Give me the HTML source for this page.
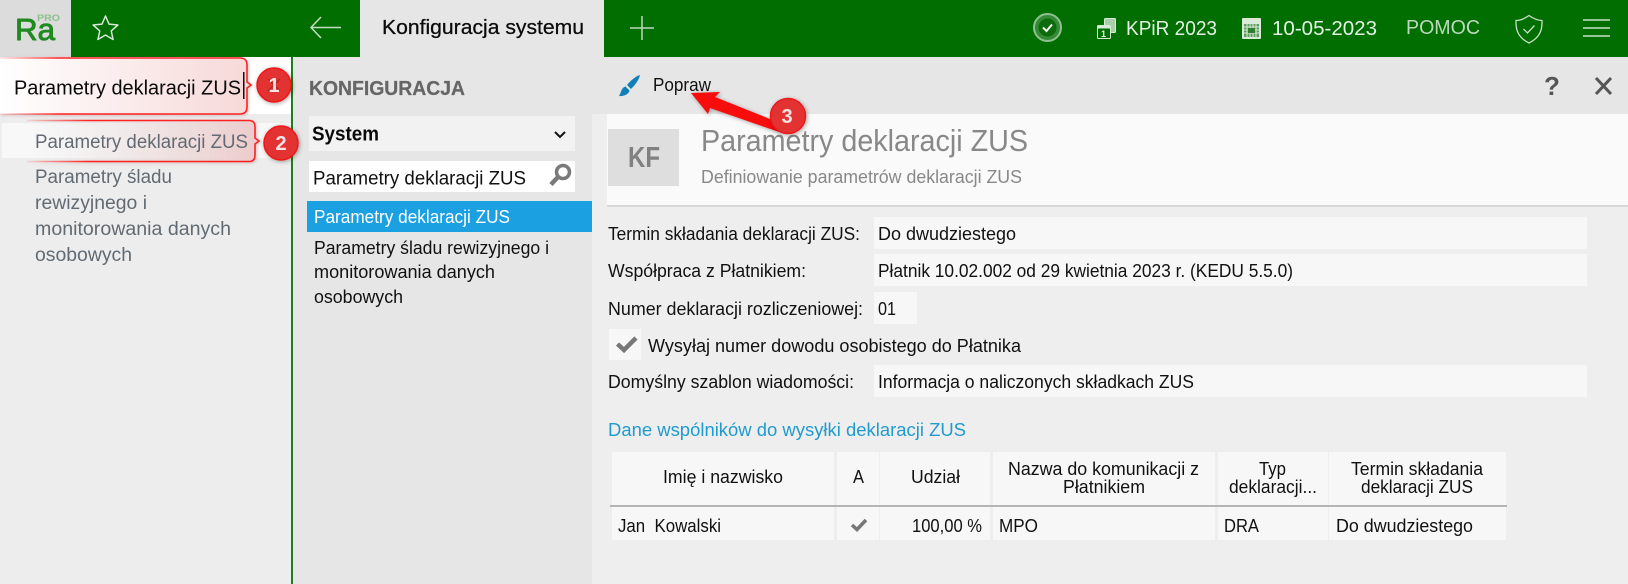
<!DOCTYPE html>
<html lang="pl">
<head>
<meta charset="utf-8">
<title>Parametry deklaracji ZUS</title>
<style>
html,body{margin:0;padding:0;width:1628px;height:584px;overflow:hidden;background:#eee}
svg{display:block;position:absolute;left:0;top:0}
text{font-family:"Liberation Sans",sans-serif;white-space:pre}
.a{font-size:19px;fill:#111}
.b{font-size:18px;fill:#111}
.g{font-size:19px;fill:#626b73}
</style>
</head>
<body>
<svg width="1628" height="584" viewBox="0 0 1628 584" xmlns="http://www.w3.org/2000/svg">
<defs>
<linearGradient id="c1" gradientUnits="userSpaceOnUse" x1="0" y1="0" x2="247" y2="0"><stop offset="0" stop-color="#fff"/><stop offset="1" stop-color="#f7d9d9"/></linearGradient>
<linearGradient id="s1" gradientUnits="userSpaceOnUse" x1="0" y1="0" x2="60" y2="0"><stop offset="0" stop-color="#ff2020" stop-opacity=".1"/><stop offset="1" stop-color="#ff2020"/></linearGradient>
<linearGradient id="c2" gradientUnits="userSpaceOnUse" x1="27" y1="0" x2="255" y2="0"><stop offset="0" stop-color="#f8f8f8" stop-opacity="0"/><stop offset="1" stop-color="#edcccc"/></linearGradient>
<linearGradient id="s2" gradientUnits="userSpaceOnUse" x1="27" y1="0" x2="90" y2="0"><stop offset="0" stop-color="#ff2020" stop-opacity=".1"/><stop offset="1" stop-color="#ff2020"/></linearGradient>
<filter id="sh" x="-30%" y="-30%" width="160%" height="160%"><feDropShadow dx="1" dy="1" stdDeviation="2" flood-color="#000" flood-opacity=".35"/></filter>
<filter id="sc" x="-10%" y="-20%" width="120%" height="140%"><feDropShadow dx="1" dy="1" stdDeviation="1.500" flood-color="#700" flood-opacity=".22"/></filter>
</defs>

<!-- backgrounds -->
<rect x="0" y="0" width="1628" height="584" fill="#eeeeee"/>
<rect x="0" y="0" width="1628" height="57" fill="#006e00"/>
<rect x="0" y="0" width="71" height="57" fill="#dcdcdc"/>
<rect x="360" y="0" width="244" height="57" fill="#e6e6e6"/>
<rect x="0" y="57" width="291" height="57" fill="#ffffff"/>
<rect x="0" y="114" width="291" height="470" fill="#ededed"/>
<rect x="291" y="57" width="2" height="527" fill="#1e7e1e"/>
<rect x="293" y="57" width="299" height="527" fill="#e6e6e6"/>
<rect x="592" y="57" width="1036" height="57" fill="#e6e6e6"/>

<!-- logo -->
<text x="15" y="40" style="font-size:31px;fill:#1f8a1f;stroke:#1f8a1f;stroke-width:.9" textLength="40" lengthAdjust="spacingAndGlyphs">Ra</text>
<text x="37" y="21" style="font-size:9px;fill:#8dbf8d;font-weight:bold" textLength="23" lengthAdjust="spacingAndGlyphs">PRO</text>

<!-- top bar icons -->
<path d="M105.500 16L109 24.100 117.900 25 111.200 30.900 113.100 39.500 105.500 35 97.900 39.500 99.800 30.900 93.100 25 102 24.100Z" fill="none" stroke="#d8e8d8" stroke-width="1.500" stroke-linejoin="round"/>
<path d="M341 27.500H311M321 17L311 27.500 321 38" fill="none" stroke="#c4dec4" stroke-width="1.500"/>
<path d="M642 16V40M630 28H654" fill="none" stroke="#bcd9bc" stroke-width="1.500"/>
<text x="382" y="34" style="font-size:20px;fill:#0a0a0a;stroke:#0a0a0a;stroke-width:.25" textLength="202" lengthAdjust="spacingAndGlyphs">Konfiguracja systemu</text>

<circle cx="1047.500" cy="27.500" r="13.500" fill="#338a33" stroke="#8fbf8f" stroke-width="2"/>
<circle cx="1047.500" cy="27.500" r="9" fill="#0d6b0d"/>
<path d="M1043 27.500L1046.500 31 1052 24.500" fill="none" stroke="#eef6ee" stroke-width="2"/>

<rect x="1104.500" y="18.500" width="11" height="14" rx="1" fill="#a9cfa9" stroke="#d8ead8"/>
<rect x="1097.500" y="25.500" width="13" height="13" rx="1" fill="#006e00" stroke="#d8ead8"/>
<rect x="1097.500" y="25.500" width="13" height="3" fill="#d8ead8"/>
<text x="1101" y="37" style="font-size:9px;font-weight:bold;fill:#e6f2e6">1</text>
<text x="1126" y="35" style="font-size:20px;fill:#e4f1e4" textLength="91" lengthAdjust="spacingAndGlyphs">KPiR 2023</text>

<rect x="1242" y="18" width="19" height="21" rx="1" fill="#d8ead8"/>
<rect x="1244" y="24" width="15" height="13" fill="#5f9c5f"/>
<path d="M1244 27h15M1244 30h15M1244 33h15M1247 24v13M1250 24v13M1253 24v13M1256 24v13" stroke="#d8ead8" stroke-width="1"/>
<rect x="1248" y="28" width="7" height="5" fill="#2f7f2f"/>
<text x="1272" y="35" style="font-size:20px;fill:#e4f1e4" textLength="105" lengthAdjust="spacingAndGlyphs">10-05-2023</text>
<text x="1406" y="34" style="font-size:20px;fill:#bcd9bc" textLength="74" lengthAdjust="spacingAndGlyphs">POMOC</text>

<path d="M1529 15.500C1524 19 1520 20.500 1516 20.500C1515.500 31 1519 38 1529 43C1539 38 1542.500 31 1542 20.500C1538 20.500 1534 19 1529 15.500Z" fill="none" stroke="#c8e0c8" stroke-width="1.300"/>
<path d="M1523.500 29L1527.500 33 1534.500 25.500" fill="none" stroke="#c8e0c8" stroke-width="1.300"/>
<path d="M1583 20H1610M1583 28H1610M1583 36H1610" stroke="#c8e0c8" stroke-width="1.500"/>

<!-- sidebar search -->
<path d="M0 58H240Q247 58 247 65V82L251 85 247 88V107Q247 114 240 114H0" fill="url(#c1)" stroke="url(#s1)" stroke-width="1.600" filter="url(#sc)"/>
<text x="14" y="94.500" style="font-size:20px;fill:#0a0a0a" textLength="227" lengthAdjust="spacingAndGlyphs">Parametry deklaracji ZUS</text>
<rect x="243" y="72" width="1.500" height="27" fill="#111"/>

<!-- sidebar list -->
<rect x="2" y="123" width="289" height="35" fill="#f8f8f8"/>
<path d="M27 120.500H249Q255 120.500 255 127V138L259 141 255 144V155Q255 161.500 249 161.500H27" fill="url(#c2)" stroke="url(#s2)" stroke-width="1.600" filter="url(#sc)"/>
<text x="35" y="148" class="g" textLength="213" lengthAdjust="spacingAndGlyphs">Parametry deklaracji ZUS</text>
<text x="35" y="183" class="g" textLength="137" lengthAdjust="spacingAndGlyphs">Parametry śladu</text>
<text x="35" y="209" class="g" textLength="112" lengthAdjust="spacingAndGlyphs">rewizyjnego i</text>
<text x="35" y="235" class="g" textLength="196" lengthAdjust="spacingAndGlyphs">monitorowania danych</text>
<text x="35" y="261" class="g" textLength="97" lengthAdjust="spacingAndGlyphs">osobowych</text>

<!-- middle panel -->
<text x="309" y="95" style="font-size:20px;font-weight:bold;fill:#666;stroke:#666;stroke-width:.25" textLength="156" lengthAdjust="spacingAndGlyphs">KONFIGURACJA</text>
<rect x="309" y="116" width="266" height="35" fill="#f2f2f2"/>
<text x="312" y="140.500" style="font-size:20px;font-weight:bold;fill:#0a0a0a" textLength="67" lengthAdjust="spacingAndGlyphs">System</text>
<path d="M555 132L560 137 565 132" fill="none" stroke="#111" stroke-width="2"/>
<rect x="309" y="161" width="266" height="31" fill="#fff"/>
<text x="313" y="184.500" class="a" textLength="213" lengthAdjust="spacingAndGlyphs">Parametry deklaracji ZUS</text>
<circle cx="563" cy="172" r="6.500" fill="none" stroke="#7a7a7a" stroke-width="3.500"/>
<path d="M558 177L551 184.500" stroke="#7a7a7a" stroke-width="4.500"/>
<rect x="307" y="201" width="285" height="31" fill="#1ba1e2"/>
<text x="314" y="223" class="b" style="fill:#fff" textLength="196" lengthAdjust="spacingAndGlyphs">Parametry deklaracji ZUS</text>
<text x="314" y="254" class="b" textLength="235" lengthAdjust="spacingAndGlyphs">Parametry śladu rewizyjnego i</text>
<text x="314" y="278" class="b" textLength="181" lengthAdjust="spacingAndGlyphs">monitorowania danych</text>
<text x="314" y="303" class="b" textLength="89" lengthAdjust="spacingAndGlyphs">osobowych</text>

<!-- toolbar -->
<path d="M640 75C636 76 630 81 627 85L631 89C635 85 639 80 640 75Z" fill="#1080b8"/>
<path d="M625.500 86.500C621 88 621.500 92 619 96C624 96.500 629 94 629.500 90.500Z" fill="#1080b8"/>
<text x="653" y="91" class="b" textLength="58" lengthAdjust="spacingAndGlyphs">Popraw</text>
<text x="1552" y="95" text-anchor="middle" style="font-size:26px;font-weight:bold;fill:#555">?</text>
<path d="M1596 78L1611 94M1611 78L1596 94" stroke="#555" stroke-width="3"/>

<!-- header card -->
<rect x="607" y="114" width="1021" height="91" fill="#fafafa"/>
<rect x="607" y="205" width="1021" height="2" fill="#d6d6d6"/>
<rect x="608" y="129" width="71" height="57" fill="#dedede"/>
<text x="628" y="167" style="font-size:29px;font-weight:bold;fill:#808080" textLength="32" lengthAdjust="spacingAndGlyphs">KF</text>
<text x="701" y="151" style="font-size:31px;fill:#888" textLength="327" lengthAdjust="spacingAndGlyphs">Parametry deklaracji ZUS</text>
<text x="701" y="183" style="font-size:18px;fill:#888" textLength="321" lengthAdjust="spacingAndGlyphs">Definiowanie parametrów deklaracji ZUS</text>

<!-- form -->
<rect x="874" y="217" width="713" height="32" fill="#f7f7f7"/>
<rect x="874" y="254" width="713" height="32" fill="#f7f7f7"/>
<rect x="874" y="292" width="43" height="32" fill="#f7f7f7"/>
<rect x="609" y="329" width="32" height="31" fill="#f7f7f7"/>
<rect x="874" y="365" width="713" height="32" fill="#f7f7f7"/>
<text x="608" y="240" class="b" textLength="252" lengthAdjust="spacingAndGlyphs">Termin składania deklaracji ZUS:</text>
<text x="878" y="240" class="b" textLength="138" lengthAdjust="spacingAndGlyphs">Do dwudziestego</text>
<text x="608" y="277" class="b" textLength="198" lengthAdjust="spacingAndGlyphs">Współpraca z Płatnikiem:</text>
<text x="878" y="277" class="b" textLength="415" lengthAdjust="spacingAndGlyphs">Płatnik 10.02.002 od 29 kwietnia 2023 r. (KEDU 5.5.0)</text>
<text x="608" y="315" class="b" textLength="255" lengthAdjust="spacingAndGlyphs">Numer deklaracji rozliczeniowej:</text>
<text x="878" y="315" class="b" textLength="18" lengthAdjust="spacingAndGlyphs">01</text>
<path d="M617.500 344L624 350 636 338" fill="none" stroke="#777" stroke-width="4.500"/>
<text x="648" y="352" class="b" textLength="373" lengthAdjust="spacingAndGlyphs">Wysyłaj numer dowodu osobistego do Płatnika</text>
<text x="608" y="388" class="b" textLength="246" lengthAdjust="spacingAndGlyphs">Domyślny szablon wiadomości:</text>
<text x="878" y="388" class="b" textLength="316" lengthAdjust="spacingAndGlyphs">Informacja o naliczonych składkach ZUS</text>
<text x="608" y="436" style="font-size:18px;fill:#1f9bcf" textLength="358" lengthAdjust="spacingAndGlyphs">Dane wspólników do wysyłki deklaracji ZUS</text>

<!-- table -->
<rect x="612" y="452" width="222" height="88" fill="#f7f7f7"/>
<rect x="837" y="452" width="42" height="88" fill="#f7f7f7"/>
<rect x="880" y="452" width="110" height="88" fill="#f7f7f7"/>
<rect x="993" y="452" width="222" height="88" fill="#f7f7f7"/>
<rect x="1218" y="452" width="110" height="88" fill="#f7f7f7"/>
<rect x="1329" y="452" width="177" height="88" fill="#f7f7f7"/>
<rect x="610" y="505" width="897" height="2" fill="#b5b5b5"/>
<text x="663" y="483" class="b" textLength="120" lengthAdjust="spacingAndGlyphs">Imię i nazwisko</text>
<text x="853" y="483" class="b" textLength="11" lengthAdjust="spacingAndGlyphs">A</text>
<text x="911" y="483" class="b" textLength="49" lengthAdjust="spacingAndGlyphs">Udział</text>
<text x="1008" y="475" class="b" textLength="191" lengthAdjust="spacingAndGlyphs">Nazwa do komunikacji z</text>
<text x="1063" y="493" class="b" textLength="82" lengthAdjust="spacingAndGlyphs">Płatnikiem</text>
<text x="1259" y="475" class="b" textLength="27" lengthAdjust="spacingAndGlyphs">Typ</text>
<text x="1229" y="493" class="b" textLength="88" lengthAdjust="spacingAndGlyphs">deklaracji...</text>
<text x="1351" y="475" class="b" textLength="132" lengthAdjust="spacingAndGlyphs">Termin składania</text>
<text x="1361" y="493" class="b" textLength="112" lengthAdjust="spacingAndGlyphs">deklaracji ZUS</text>
<text x="618" y="532" class="b" textLength="103" lengthAdjust="spacingAndGlyphs">Jan  Kowalski</text>
<path d="M852 525L857 529.500 866 520" fill="none" stroke="#777" stroke-width="3.500"/>
<text x="912" y="532" class="b" textLength="70" lengthAdjust="spacingAndGlyphs">100,00 %</text>
<text x="999" y="532" class="b" textLength="39" lengthAdjust="spacingAndGlyphs">MPO</text>
<text x="1224" y="532" class="b" textLength="35" lengthAdjust="spacingAndGlyphs">DRA</text>
<text x="1336" y="532" class="b" textLength="137" lengthAdjust="spacingAndGlyphs">Do dwudziestego</text>

<!-- annotations -->
<path d="M691 93L720 92 715 97 770 119 782 133 710 108 708 114Z" fill="#f80d0d" filter="url(#sh)"/>
<g filter="url(#sh)">
<circle cx="274" cy="85" r="17" fill="#e23333" stroke="#f01818" stroke-width="1.500"/>
<circle cx="281" cy="143" r="17" fill="#e23333" stroke="#f01818" stroke-width="1.500"/>
<circle cx="788" cy="116" r="17.500" fill="#e23333" stroke="#f01818" stroke-width="1.500"/>
</g>
<path d="M268 79L280 91M280 79L268 91" stroke="#a02525" stroke-width="1"/>
<text x="274" y="92" text-anchor="middle" style="font-size:20px;font-weight:bold;fill:#f6e4e4">1</text>
<text x="281" y="150" text-anchor="middle" style="font-size:20px;font-weight:bold;fill:#f6e4e4">2</text>
<text x="787" y="123" text-anchor="middle" style="font-size:20px;font-weight:bold;fill:#f6e4e4">3</text>
</svg>
</body>
</html>
